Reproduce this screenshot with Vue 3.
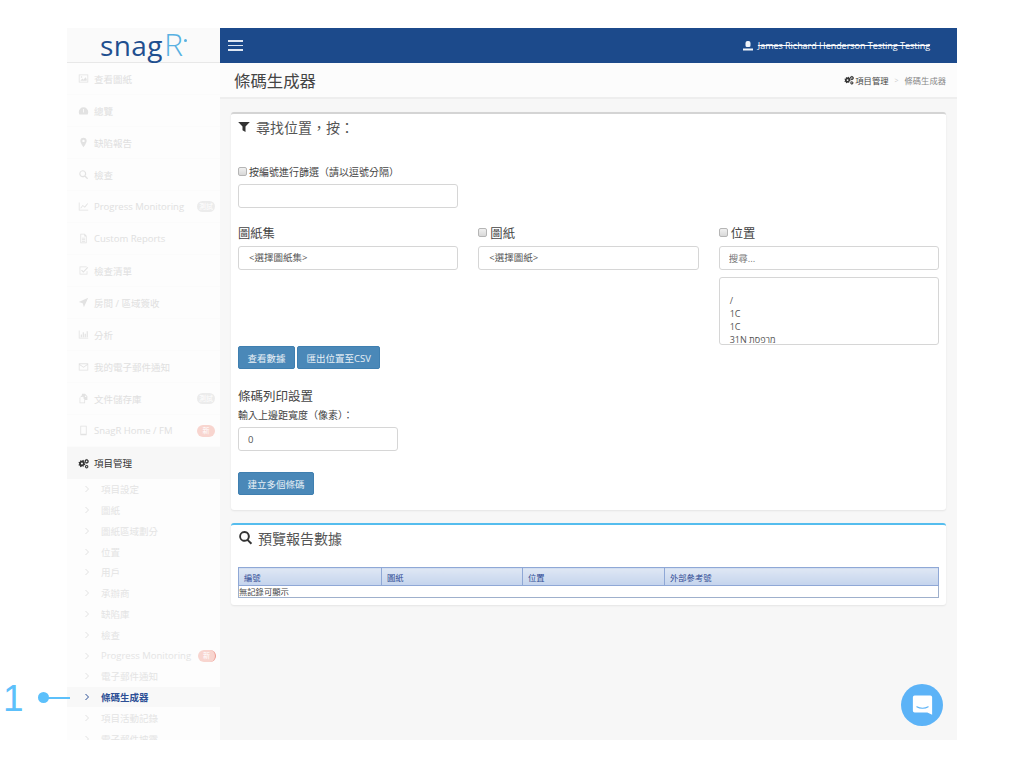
<script setup>
const menu = [
  { label: '查看圖紙', icon: 'image' },
  { label: '總覽', icon: 'gauge' },
  { label: '缺陷報告', icon: 'pin' },
  { label: '檢查', icon: 'search' },
  { label: 'Progress Monitoring', icon: 'chart', badge: '測試' },
  { label: 'Custom Reports', icon: 'file' },
  { label: '檢查清單', icon: 'check' },
  { label: '房間 / 區域簽收', icon: 'arrow' },
  { label: '分析', icon: 'bars' },
  { label: '我的電子郵件通知', icon: 'mail' },
  { label: '文件儲存庫', icon: 'copy', badge: '測試' },
  { label: 'SnagR Home / FM', icon: 'tablet', badge: '新', isNew: true }
]
const sub = [
  { label: '項目設定' }, { label: '圖紙' }, { label: '圖紙區域劃分' }, { label: '位置' },
  { label: '用戶' }, { label: '承辦商' }, { label: '缺陷庫' }, { label: '檢查' },
  { label: 'Progress Monitoring', badge: '新' }, { label: '電子郵件通知' },
  { label: '條碼生成器', active: true }, { label: '項目活動記錄' }, { label: '電子郵件披露' }
]
const icons = {
  image: 'M1 2h12v10H1zM2 3v8h10V3zM3 10l2.500-3 1.500 1.500L9.500 5.500 11 7.500V10zM4.500 4a1 1 0 1 1 0 2 1 1 0 0 1 0-2z',
  gauge: 'M7 3a6 6 0 0 1 6 6c0 1-.3 2-.7 3H1.700C1.300 11 1 10 1 9a6 6 0 0 1 6-6zM6.500 5v4.500h1V5z',
  pin: 'M7 1a4 4 0 0 1 4 4c0 2.500-4 8-4 8S3 7.500 3 5a4 4 0 0 1 4-4zm0 2.500a1.500 1.500 0 1 0 0 3 1.500 1.500 0 0 0 0-3z',
  search: 'M6 1.500a4.500 4.500 0 0 1 3.600 7.200l3.200 3.200-1.100 1.100-3.200-3.200A4.500 4.500 0 1 1 6 1.500zm0 1.500a3 3 0 1 0 0 6 3 3 0 0 0 0-6z',
  chart: 'M1 2h1v9h11v1H1zM3 9l3-4 2.500 2L12 3l.8.600L8.700 8.500 6.200 6.500 3.800 9.700z',
  file: 'M3 1h5.500L11 3.500V13H3zM4 2v10h6V4.500H8V2zM5 6h4v1H5zM5 8h4v1H5zM5 10h4v1H5z',
  check: 'M2 2h9v1H3v8h8V8h1v4H2zM5 6l1.800 1.800L12 2.600l1 1-6.200 6.200L4 7z',
  arrow: 'M13 1 7.500 13 6 8 1 6.500z',
  bars: 'M1 2h1v9h11v1H1zM3.500 7h1.500v3.500H3.500zM6 4h1.500v6.500H6zM8.500 6H10v4.500H8.500zM11 3h1.500v7.500H11z',
  mail: 'M1 3h12v9H1zM2 5.200V11h10V5.200L7 8.500zM2.300 4 7 7.200 11.700 4z',
  copy: 'M5 1h4l3 3v5H9v4H2V6l3-3zM6 2v3H3v7h5V8l-1-1V5L6 4zM9 3v2h2z',
  tablet: 'M3 1h8v12H3zM4 2v9h6V2z'
}
const cog = 'M5 3l.8.200.6-.9 1.100.6-.3 1 .6.600 1-.3.600 1.100-.9.600.2.800-.2.800.9.600-.6 1.100-1-.3-.6.600.3 1-1.100.6-.6-.9L5 11l-.8-.2-.6.900-1.100-.6.300-1-.6-.6-1 .3L.6 8.700l.9-.6L1.300 7.300l.2-.8-.9-.6.6-1.100 1 .3.600-.6-.3-1 1.100-.6.600.9zm0 2.800a1.300 1.300 0 1 0 0 2.600 1.300 1.300 0 0 0 0-2.600zM11 1l.5.800.9-.2.300.9.900.3-.2.900.600.600-.6.600.2.900-.9.300-.3.900-.9-.2L11 7.500l-.5-.7-.9.200-.3-.9-.9-.3.200-.9L8 4.300l.6-.6-.2-.9.900-.3.300-.9.900.2zm0 2.300a1 1 0 1 0 0 2 1 1 0 0 0 0-2zM11 8.500l.4.600.7-.1.200.7.700.200-.1.700.5.500-.5.500.1.700-.7.200-.2.700-.7-.1-.4.600-.4-.6-.7.100-.2-.7-.7-.2.100-.7-.5-.5.500-.5-.1-.7.700-.2.200-.7.700.1zm0 1.700a.8.800 0 1 0 0 1.600.8.800 0 0 0 0-1.600z'
const locations = ['/', '1C', '1C', '31N מרפסת']
const columns = ['編號', '圖紙', '位置', '外部參考號']
</script>

<template>
  <div class="frame">
    <aside class="sidebar">
      <div class="logo">
        <span class="snag">snag</span><span class="r">R</span><i class="tip"></i>
      </div>
      <ul class="menu">
        <li v-for="item in menu" :key="item.label" class="menu-item">
          <svg class="ico" viewBox="0 0 14 14"><path :d="icons[item.icon]" fill-rule="evenodd" /></svg>
          <span class="menu-label">{{ item.label }}</span>
          <span v-if="item.badge" class="badge" :class="{ fresh: item.isNew }">{{ item.badge }}</span>
        </li>
      </ul>
      <div class="group-head">
        <svg class="ico dark" viewBox="0 0 14 14"><path :d="cog" fill-rule="evenodd" /></svg>
        <span>項目管理</span>
      </div>
      <ul class="sub">
        <li v-for="item in sub" :key="item.label" class="sub-item" :class="{ active: item.active }">
          <svg class="chev" viewBox="0 0 6 8"><path d="M1.500 1 4.500 4 1.500 7" /></svg>
          <span class="sub-label">{{ item.label }}</span>
          <span v-if="item.badge" class="badge fresh edge">{{ item.badge }}</span>
        </li>
      </ul>
    </aside>

    <div class="main">
      <header class="topbar">
        <div class="burger"><i></i><i></i><i></i></div>
        <div class="user">
          <svg class="user-ico" viewBox="0 0 10 10"><path d="M2.500 2a2 2 0 0 1 2-2h1a2 2 0 0 1 2 2v2.500a1.500 1.500 0 0 1-1.500 1.500H4A1.500 1.500 0 0 1 2.500 4.500zM0 7.500h10V9.500H0z" /></svg>
          <span class="user-name">James Richard Henderson Testing Testing</span>
        </div>
      </header>

      <div class="page-head">
        <h1>條碼生成器</h1>
        <div class="crumbs">
          <svg class="crumb-ico" viewBox="0 0 14 14"><path :d="cog" fill-rule="evenodd" /></svg>
          <span class="crumb-a">項目管理</span>
          <span class="crumb-sep">&gt;</span>
          <span class="crumb-b">條碼生成器</span>
        </div>
      </div>

      <section class="panel filter">
        <h2 class="panel-title">
          <svg class="title-ico" viewBox="0 0 14 12"><path d="M0 0h14L8.800 5.500V12L5.200 10V5.500z" /></svg>
          <span>尋找位置，按：</span>
        </h2>

        <label class="small-check"><input type="checkbox" class="cb" />按編號進行篩選（請以逗號分隔）</label>
        <input class="field id-field" type="text" />

        <div class="selectors">
          <div>
            <div class="col-label">圖紙集</div>
            <div class="field select">&lt;選擇圖紙集&gt;</div>
          </div>
          <div>
            <div class="col-label"><input type="checkbox" class="cb" />圖紙</div>
            <div class="field select">&lt;選擇圖紙&gt;</div>
          </div>
          <div>
            <div class="col-label"><input type="checkbox" class="cb" />位置</div>
            <input class="field search-field" type="text" placeholder="搜尋..." />
            <div class="list">
              <div v-for="(loc, i) in locations" :key="i" class="list-row">{{ loc }}</div>
            </div>
          </div>
        </div>

        <div class="actions">
          <button class="btn" type="button">查看數據</button>
          <button class="btn" type="button">匯出位置至CSV</button>
        </div>

        <h3 class="sub-title">條碼列印設置</h3>
        <div class="hint">輸入上邊距寬度（像素）：</div>
        <input class="field margin-field" type="text" value="0" />
        <div><button class="btn create" type="button">建立多個條碼</button></div>
      </section>

      <section class="panel preview">
        <h2 class="panel-title">
          <svg class="title-ico big" viewBox="0 0 14 14"><path fill-rule="evenodd" d="M6 1a5 5 0 0 1 4 8l3.200 3.200-1.300 1.300L8.700 10.300A5 5 0 1 1 6 1zm0 1.800a3.200 3.200 0 1 0 0 6.400 3.200 3.200 0 0 0 0-6.400z" /></svg>
          <span>預覽報告數據</span>
        </h2>
        <table class="grid">
          <colgroup>
            <col class="c1" /><col class="c2" /><col class="c3" /><col />
          </colgroup>
          <thead>
            <tr><th v-for="c in columns" :key="c">{{ c }}</th></tr>
          </thead>
          <tbody>
            <tr><td colspan="4">無記錄可顯示</td></tr>
          </tbody>
        </table>
      </section>
    </div>

    <div class="chat">
      <svg viewBox="0 0 24 24" class="chat-ico">
        <path d="M3 1h18a2 2 0 0 1 2 2v20l-5.500-2.500H3a2 2 0 0 1-2-2V3a2 2 0 0 1 2-2z" fill="#fff" />
        <path d="M5.500 14c3.500 2.400 9.500 2.400 13 0" fill="none" stroke="#5cb3f7" stroke-width="1.200" stroke-linecap="round" />
      </svg>
    </div>
  </div>

  <div class="callout">
    <span class="callout-num">1</span>
    <i class="callout-dot"></i>
    <i class="callout-line"></i>
  </div>
</template>

<style>
html, body { margin: 0; background: #fff; }
</style>

<style scoped>
* { box-sizing: border-box; }
ul { list-style: none; margin: 0; padding: 0; }
.frame {
  position: relative;
  display: flex;
  width: 890px;
  height: 712px;
  margin: 28px 0 0 67px;
  font-family: "Open Sans", "Noto Sans CJK TC", sans-serif;
  font-size: 9.5px;
  color: #333;
}
.sidebar {
  display: flex;
  flex-direction: column;
  width: 153px;
  flex: none;
  background: #fdfdfd;
}
.logo {
  display: flex;
  justify-content: center;
  align-items: baseline;
  height: 35px;
  flex: none;
  background: #fafafa;
  border-bottom: 1px solid #e8e8e8;
  font-family: "Open Sans", sans-serif;
  font-size: 28px;
  line-height: 31px;
}
.snag { color: #1f4f8f; letter-spacing: .4px; }
.r { margin-left: 1px; color: #58b1e2; font-size: 32px; font-weight: 300; }
.tip { width: 3px; height: 3px; margin-left: 1px; transform: translateY(-14px); background: #58b1e2; border-radius: 50%; }
.menu-item {
  display: flex;
  align-items: center;
  height: 32px;
  padding: 0 5px 0 11px;
  color: #e0e0e0;
  border-bottom: 1px solid #fbfbfb;
}
.ico { width: 11px; height: 11px; flex: none; fill: #e2e2e2; margin-right: 5px; }
.ico.dark { fill: #333; }
.menu-label { flex: 1; white-space: nowrap; }
.badge {
  flex: none;
  width: 18px;
  height: 11px;
  border-radius: 6px;
  background: #ececec;
  color: #fff;
  font-size: 7px;
  line-height: 11px;
  text-align: center;
}
.badge.fresh { background: #f8d5cf; height: 12px; line-height: 12px; }
.badge.edge { border-right: 1.500px solid #ee9a90; }
.group-head {
  display: flex;
  align-items: center;
  height: 32px;
  flex: none;
  padding-left: 11px;
  background: #f7f7f7;
  color: #333;
}
.sub { flex: 1; min-height: 0; overflow: hidden; }
.sub-item {
  display: flex;
  align-items: center;
  width: 149px;
  height: 20.77px;
  padding-left: 17px;
  color: #e4e4e4;
}
.chev {
  width: 6px;
  height: 8px;
  flex: none;
  margin-right: 11px;
  fill: none;
  stroke: #e2e2e2;
  stroke-width: 1;
}
.sub-label { flex: 1; white-space: nowrap; }
.sub-item.active {
  width: 153px;
  background: #f8f8f8;
  color: #2c4f96;
  font-weight: 700;
}
.sub-item.active .chev { stroke: #2c4f96; }
.main { flex: 1; min-width: 0; background: #f7f7f7; }
.topbar {
  display: flex;
  align-items: center;
  justify-content: space-between;
  height: 35px;
  padding: 0 27px 0 8px;
  background: #1c4a8b;
}
.burger { display: flex; flex-direction: column; gap: 3px; width: 15px; }
.burger i { height: 1.500px; background: #dfe7f2; }
.user { display: flex; align-items: center; gap: 5px; color: #fff; }
.user-ico { width: 10px; height: 10px; fill: #f0f4fa; }
.user-name {
  font-size: 9px;
  letter-spacing: -.03px;
  white-space: nowrap;
  text-decoration: line-through;
  text-decoration-thickness: 1px;
}
.page-head {
  display: flex;
  align-items: center;
  justify-content: space-between;
  height: 36px;
  padding: 0 11px 0 14px;
  background: #fcfcfc;
  border-bottom: 2px solid #eee;
}
h1 { margin: 0; font-size: 16.400px; font-weight: 400; color: #444; }
.crumbs { display: flex; align-items: center; font-size: 8.300px; }
.crumb-ico { width: 10px; height: 10px; margin-right: 1px; fill: #333; }
.crumb-a { color: #444; }
.crumb-sep { margin: 0 6px; color: #ccc; font-size: 7px; }
.crumb-b { color: #888; }
.panel {
  margin: 0 11px;
  background: #fff;
  border-radius: 3px;
  box-shadow: 0 1px 2px rgba(0,0,0,.08);
}
.filter {
  height: 398px;
  margin-top: 13px;
  padding: 0 7px;
  border-top: 2px solid #d4d4d4;
}
.preview {
  height: 82px;
  margin-top: 13px;
  padding: 0 7px;
  border-top: 2px solid #55bdee;
}
.panel-title {
  display: flex;
  align-items: center;
  height: 26px;
  margin: 0;
  font-size: 14px;
  font-weight: 400;
  color: #555;
}
.preview .panel-title { height: 25px; }
.title-ico { width: 12px; height: 10px; margin-right: 6px; fill: #333; flex: none; }
.title-ico.big { width: 15px; height: 15px; margin-right: 5px; }
.small-check {
  display: flex;
  align-items: center;
  height: 14px;
  margin-top: 24px;
  font-size: 10px;
  color: #444;
}
.cb {
  appearance: none;
  width: 9px;
  height: 9px;
  margin: 0 3px 0 0;
  flex: none;
  border: 1px solid #b5b5b5;
  border-radius: 2px;
  background: linear-gradient(#f0f0f0, #d8d8d8);
}
.small-check .cb { margin-right: 2px; }
.field {
  display: block;
  height: 24px;
  padding: 0 9px;
  border: 1px solid #d6d6d6;
  border-radius: 3px;
  background: #fff;
  font: inherit;
  font-size: 9.500px;
  color: #555;
  outline: none;
}
.id-field { width: 220px; margin-top: 6px; }
.selectors {
  display: grid;
  grid-template-columns: repeat(3, 1fr);
  column-gap: 20px;
  margin-top: 15px;
  width: 701px;
  height: 123px;
}
.col-label {
  display: flex;
  align-items: center;
  height: 23px;
  padding-bottom: 4px;
  font-size: 12.300px;
  color: #444;
}
.select { width: 100%; line-height: 22px; padding-left: 10px; }
.search-field { width: 100%; }
.search-field::placeholder { color: #777; }
.list {
  height: 68px;
  margin-top: 7px;
  padding: 3px 10px 0;
  overflow: hidden;
  border: 1px solid #d6d6d6;
  border-radius: 3px;
  font-size: 9px;
  color: #555;
}
.list-row { height: 13px; line-height: 13px; }
.list-row:first-child { margin-top: 13px; }
.actions { display: flex; gap: 2px; }
.btn {
  height: 23px;
  padding: 0 8.500px;
  border: 1px solid #3f7fb0;
  border-radius: 2px;
  background: #4a88b8;
  color: #e8f0f6;
  font: inherit;
  font-size: 9.500px;
}
.sub-title {
  margin: 19px 0 0;
  font-size: 12.500px;
  line-height: 18px;
  font-weight: 400;
  color: #444;
}
.hint { margin-top: 1px; line-height: 16px; font-size: 10px; color: #444; }
.margin-field { width: 160px; margin-top: 4px; }
.create { margin-top: 21px; }
.grid {
  width: 701px;
  margin-top: 17px;
  table-layout: fixed;
  border-collapse: collapse;
  border: 1px solid #9fb0cc;
  font-size: 8.300px;
}
.c1 { width: 143px; }
.c2 { width: 141px; }
.c3 { width: 142px; }
th {
  height: 18px;
  padding: 0 0 0 5px;
  text-align: left;
  font-weight: 400;
  color: #2f4b94;
  background: linear-gradient(#dfe7f4, #c4d4ed);
  border: 1px solid #8fa8d6;
}
td { height: 12px; padding: 0; line-height: 11px; color: #444; }
.chat {
  position: absolute;
  right: 14px;
  bottom: 14px;
  display: flex;
  align-items: center;
  justify-content: center;
  width: 42px;
  height: 42px;
  border-radius: 50%;
  background: #5cb3f7;
}
.chat-ico { width: 21px; height: 22px; }
.callout { position: absolute; left: 0; top: 680px; width: 70px; height: 36px; }
.callout-num {
  position: absolute;
  left: 3px;
  top: 1px;
  font-family: "Liberation Sans", sans-serif;
  font-size: 37px;
  line-height: 36px;
  color: #5cc0fb;
}
.callout-dot {
  position: absolute;
  left: 38px;
  top: 12px;
  width: 11px;
  height: 11px;
  border-radius: 50%;
  background: #5cc0fb;
}
.callout-line {
  position: absolute;
  left: 45px;
  top: 16.500px;
  width: 25px;
  height: 2px;
  background: #5cc0fb;
}
</style>
